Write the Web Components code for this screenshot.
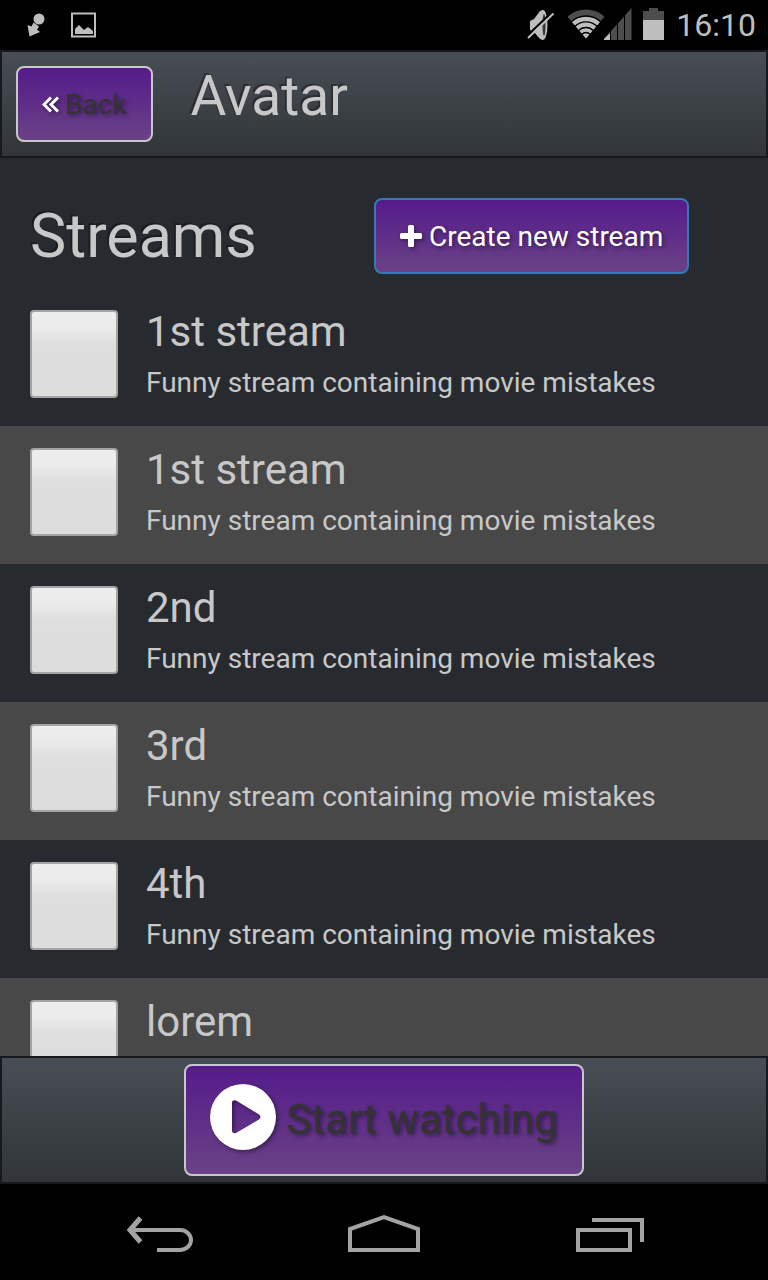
<!DOCTYPE html>
<html lang="en">
<head>
<meta charset="utf-8">
<meta name="viewport" content="width=device-width, initial-scale=1">
<title>Avatar – Streams</title>
<style>
  body { margin: 0; background: #272b30; color: #c8c8c8; font-family: Roboto, "Liberation Sans", sans-serif; font-size: 28px; }
</style>
</head>
<body>
<stream-app></stream-app>
<script>
const define = (name, html, setup) => {
  const tpl = document.createElement('template');
  tpl.innerHTML = html;
  customElements.define(name, class extends HTMLElement {
    constructor() {
      super();
      this.attachShadow({ mode: 'open' }).append(tpl.content.cloneNode(true));
    }
    connectedCallback() { if (setup) setup(this, this.shadowRoot); }
  });
};

define('status-bar', `
<style>
  :host { display: flex; justify-content: space-between; align-items: center; height: 50px; padding: 0 12px 0 24px; background: #000; color: #bebebe; font-size: 32px; line-height: 48px; }
  div { display: flex; align-items: center; }
  .notes { gap: 22px; }
  svg { display: block; }
  time { margin-left: 12px; }
</style>
<div class="notes">
  <svg width="24" height="50" fill="#bebebe" aria-hidden="true"><circle cx="15" cy="19" r="5.5"/><path d="M9.500 22.500l5.500 4-2 3 3 2.500L5.500 36.500 3.500 25l4 1.500z"/></svg>
  <svg width="26" height="50" aria-hidden="true"><path d="M2 13.500h23v23H2z" fill="none" stroke="#bebebe" stroke-width="2"/><path d="M5 34v-5l4-4 5 5 4-3 5 4v3z" fill="#bebebe"/></svg>
</div>
<div>
  <svg width="42" height="50" aria-hidden="true"><path d="M4 21l4-2 6-8 3-1v30l-3-1-6-7-4-2z" fill="#bebebe"/><ellipse cx="17" cy="25" rx="4.500" ry="15" fill="#bebebe"/><ellipse cx="18" cy="25" rx="1.500" ry="11" fill="#333"/><path d="M0 37L26 12" stroke="#000" stroke-width="2"/><path d="M2 38L27.500 13.500" stroke="#bebebe" stroke-width="2"/></svg>
  <svg width="36" height="50" viewBox="0 0 37 50" preserveAspectRatio="none" aria-hidden="true"><path d="M18.500 38.500L-.5 16.600A29 29 0 0 1 37.500 16.600z" fill="#4d4d4d"/><path d="M18.500 38.500L4.100 21.900A22 22 0 0 1 32.900 21.900z" fill="#bebebe"/><g fill="none" stroke="#000" stroke-width="1.300"><circle cx="18.500" cy="38.500" r="22.500"/><circle cx="18.500" cy="38.500" r="16.700"/><circle cx="18.500" cy="38.500" r="11"/><circle cx="18.500" cy="38.500" r="6"/></g></svg>
  <svg width="28" height="50" aria-hidden="true"><path d="M-1 40L27.500 8v32z" fill="#4d4d4d"/><path d="M-1 40L6 33v7z" fill="#bebebe"/><path d="M6.500 10v31M13.500 10v31M20.500 10v31" stroke="#000" stroke-width="1"/></svg>
  <svg width="32" height="50" aria-hidden="true"><path d="M11 20v-9h6V8h9v3h6v9z" fill="#4d4d4d"/><path d="M11 20h21v20H11z" fill="#bebebe"/></svg>
  <time>16:10</time>
</div>`);

define('action-button', `
<style>
  :host { display: inline-block; --edge: #c8c8c8; --ink: #333; --tall: 76px; }
  :host([tone="primary"]) { --edge: #337ab7; --ink: #fff; }
  :host([size="large"]) { --tall: 112px; font-size: 42px; line-height: 48px; }
  button { display: flex; align-items: center; height: var(--tall); padding: 0 24px; border: 2px solid var(--edge); border-radius: 8px; background: linear-gradient(#551a8b, #6a4386); background-origin: border-box; color: var(--ink); font: inherit; white-space: nowrap; text-shadow: 2px 2px 4px rgba(0,0,0,.45); cursor: pointer; }
  ::slotted(svg) { display: block; flex: none; fill: #fff; filter: drop-shadow(2px 2px 2px rgba(0,0,0,.4)); }
</style>
<button type="button"><slot name="icon"></slot><span><slot></slot></span></button>`);

define('page-header', `
<style>
  :host { display: flex; align-items: flex-start; gap: 38px; padding: 14px; border: 2px solid #17191c; background: linear-gradient(#484e55, #3a3f44 60%, #313539); }
  h1 { margin: 0; font-size: 55px; line-height: 60px; font-weight: 400; text-shadow: -2px -2px 0 rgba(0,0,0,.3); }
</style>
<slot name="action"></slot><h1><slot></slot></h1>`);

define('section-heading', `
<style>
  :host { display: grid; grid-template-columns: 344px 1fr; align-items: center; padding: 40px 30px 14px; }
  h2 { margin: 0; font-size: 61px; line-height: 76px; font-weight: 400; text-shadow: -2px -2px 0 rgba(0,0,0,.3); }
</style>
<h2><slot></slot></h2><div><slot name="action"></slot></div>`);

define('stream-item', `
<style>
  :host { display: block; }
  :host(:nth-of-type(even)) { background: #484848; }
  label { display: flex; align-items: flex-start; gap: 28px; padding: 22px 30px 24px; cursor: pointer; }
  input { appearance: none; flex: none; width: 88px; height: 88px; margin: 0; border: 2px solid #a4a4a4; border-radius: 4px; background: linear-gradient(#ededed, #ebebeb 18%, #dedede 38%, #dddddd); }
  input:checked { background: #6a4386; }
  .title, .about { display: block; }
  .title { font-size: 42px; line-height: 44px; margin-bottom: 8px; }
  .about { min-height: 40px; line-height: 42px; margin-bottom: -2px; }
</style>
<label><input type="checkbox"><span><span class="title"></span><span class="about"><slot></slot></span></span></label>`,
(host, root) => { root.querySelector('.title').textContent = host.getAttribute('heading'); });

define('page-footer', `
<style>
  :host { display: flex; justify-content: center; padding: 6px; border: 2px solid #17191c; background: linear-gradient(#484e55, #3a3f44 60%, #313539); }
</style>
<slot></slot>`);

define('system-nav', `
<style>
  :host { display: block; background: #000; }
  nav { display: grid; grid-template-columns: repeat(3, 1fr); padding: 0 48px; }
  button { display: flex; justify-content: center; align-items: center; height: 96px; padding: 0; border: 0; background: none; cursor: pointer; }
  svg { display: block; fill: none; stroke: #a3a3a3; stroke-width: 4; }
</style>
<nav aria-label="System">
  <button type="button" aria-label="Back"><svg width="72" height="96"><path d="M6 46H56a11 10 0 0 1 0 20H33"/><path d="M16.500 34L6 46l10.500 12" stroke-width="5"/></svg></button>
  <button type="button" aria-label="Home"><svg width="72" height="96"><path d="M2 66V45L36 33 70 45v21z"/></svg></button>
  <button type="button" aria-label="Recent apps"><svg width="72" height="96"><path d="M6 46h52v20H6zM20 36h50v22"/></svg></button>
</nav>`);

define('stream-app', `
<style>
  :host { display: flex; flex-direction: column; height: 100vh; }
  main { flex: 1; min-height: 0; overflow-y: auto; scrollbar-width: none; }
  status-bar, page-header, page-footer, system-nav { flex: none; }
  .chevrons { margin-right: 6px; fill: none; stroke: #fff; stroke-width: 3; }
  .plus { margin-right: 6px; }
  .play { margin: 0 10px 6px 0; }
</style>
<status-bar></status-bar>
<page-header>
  <action-button slot="action"><svg slot="icon" class="chevrons" width="17" height="18" aria-hidden="true"><path d="M9 2.500L2 9.500l7 7M16 2.500L9 9.500l7 7"/></svg>Back</action-button>
  Avatar
</page-header>
<main>
  <section-heading>Streams
    <action-button slot="action" tone="primary"><svg slot="icon" class="plus" width="23" height="24" aria-hidden="true"><path d="M9.500 1h3a1.500 1.500 0 0 1 1.500 1.500V9h6.500a1.500 1.500 0 0 1 1.500 1.500v3a1.500 1.500 0 0 1-1.500 1.500H14v6.500a1.500 1.500 0 0 1-1.500 1.500h-3A1.500 1.500 0 0 1 8 21.500V15H1.500A1.500 1.500 0 0 1 0 13.500v-3A1.500 1.500 0 0 1 1.500 9H8V2.500A1.500 1.500 0 0 1 9.500 1z"/></svg>Create new stream</action-button>
  </section-heading>
  <section aria-label="Streams">
    <stream-item heading="1st stream">Funny stream containing movie mistakes</stream-item>
    <stream-item heading="1st stream">Funny stream containing movie mistakes</stream-item>
    <stream-item heading="2nd">Funny stream containing movie mistakes</stream-item>
    <stream-item heading="3rd">Funny stream containing movie mistakes</stream-item>
    <stream-item heading="4th">Funny stream containing movie mistakes</stream-item>
    <stream-item heading="lorem"></stream-item>
  </section>
</main>
<page-footer>
  <action-button size="large"><svg slot="icon" class="play" width="66" height="66" aria-hidden="true"><path fill-rule="evenodd" d="M33 0a33 33 0 1 1 0 66 33 33 0 0 1 0-66zM22 19v27q0 4 4 3L49 35.500q3-2.500 0-5L26 16.500q-4-1-4 2.500z"/></svg>Start watching</action-button>
</page-footer>
<system-nav></system-nav>`);
</script>
</body>
</html>
